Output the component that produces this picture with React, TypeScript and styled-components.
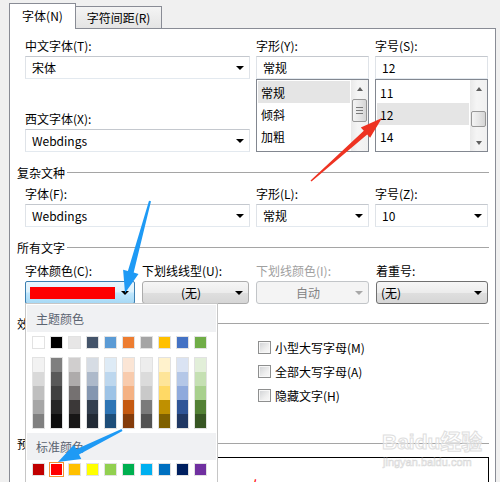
import React from "react";
import styled, { createGlobalStyle, css } from "styled-components";

const GlobalStyle = createGlobalStyle`
  html, body {
    margin: 0;
    padding: 0;
    background: #f0f0f0;
  }
  body {
    font-family: "Noto Sans CJK SC", "Microsoft YaHei", sans-serif;
    font-size: 12px;
    color: #000;
  }
  * {
    box-sizing: border-box;
  }
`;

const Page = styled.div`
  position: relative;
  width: 500px;
  height: 482px;
  overflow: hidden;
  background: #f0f0f0;
`;

const TabStrip = styled.div`
  display: flex;
  align-items: flex-end;
  height: 28px;
  padding-left: 9px;
`;

const Tab = styled.div<{ $active?: boolean }>`
  display: flex;
  align-items: center;
  justify-content: center;
  border: 1px solid #898c95;
  border-bottom: none;
  line-height: 1;
  white-space: nowrap;
  ${(p) =>
    p.$active
      ? css`
          width: 67px;
          height: 26px;
          margin-bottom: -1px;
          padding-bottom: 2px;
          background: #fff;
          position: relative;
          z-index: 1;
        `
      : css`
          width: 86px;
          height: 22px;
          border-left: none;
          background: linear-gradient(#f4f4f4, #e4e4e4);
        `}
`;

const Panel = styled.div`
  width: 487px;
  height: 460px;
  margin-left: 9px;
  border: 1px solid #898c95;
  border-bottom: none;
  background: #fff;
  padding: 9px 6px 0 6px;
`;

const SectionHeader = styled.div<{ $top: number }>`
  display: flex;
  align-items: center;
  gap: 2px;
  height: 16px;
  margin-top: ${(p) => p.$top}px;
  padding-left: 1px;
  white-space: nowrap;
  &::after {
    content: "";
    flex: 1;
    height: 1px;
    background: #a5a5a5;
  }
`;

const Block = styled.div<{ $top?: number; $cols: string; $gap: number }>`
  display: grid;
  grid-template-columns: ${(p) => p.$cols};
  column-gap: ${(p) => p.$gap}px;
  margin-top: ${(p) => p.$top ?? 0}px;
  padding-left: 9px;
`;

const Field = styled.div`
  display: flex;
  flex-direction: column;
`;

const Label = styled.div<{ $disabled?: boolean; $top?: number }>`
  height: 16px;
  line-height: 16px;
  margin-top: ${(p) => p.$top ?? 0}px;
  margin-bottom: 2px;
  white-space: nowrap;
  color: ${(p) => (p.$disabled ? "#a0a0a0" : "#000")};
`;

const TextBox = styled.div`
  display: flex;
  align-items: center;
  justify-content: space-between;
  height: 23px;
  padding: 0 5px 0 6px;
  border: 1px solid;
  border-color: #c4c8ce #dfe3e8 #e3e9ef #dfe3e8;
  background: #fff;
  white-space: nowrap;
`;

const DropArrow = styled.span<{ $disabled?: boolean }>`
  flex: none;
  width: 0;
  height: 0;
  border-left: 4px solid transparent;
  border-right: 4px solid transparent;
  border-top: 4px solid ${(p) => (p.$disabled ? "#a8a8a8" : "#000")};
`;

const ListBox = styled.div`
  display: flex;
  height: 73px;
  border: 1px solid #828790;
  background: #fff;
`;

const ListItems = styled.div`
  flex: 1;
  padding: 1px;
`;

const ListItem = styled.div<{ $selected?: boolean }>`
  display: flex;
  align-items: center;
  height: 22px;
  padding-left: 3px;
  background: ${(p) => (p.$selected ? "#e5e5e5" : "transparent")};
`;

const ScrollBar = styled.div`
  display: flex;
  flex-direction: column;
  width: 17px;
  background: linear-gradient(to right, #e9e9e9, #f5f5f5 40%, #f0f0f0);
`;

const ScrollArrow = styled.div<{ $down?: boolean }>`
  display: flex;
  align-items: center;
  justify-content: center;
  height: 17px;
  &::before {
    content: "";
    width: 0;
    height: 0;
    border-left: 3.5px solid transparent;
    border-right: 3.5px solid transparent;
    ${(p) =>
      p.$down
        ? css`
            border-top: 4px solid #606060;
          `
        : css`
            border-bottom: 4px solid #606060;
          `}
  }
`;

const Thumb = styled.div<{ $offset: number; $size: number; $grip?: boolean }>`
  display: flex;
  flex-direction: column;
  align-items: center;
  justify-content: center;
  gap: 2px;
  height: ${(p) => p.$size}px;
  margin: ${(p) => p.$offset}px 1px 0 1px;
  border: 1px solid #979797;
  border-radius: 2px;
  background: linear-gradient(to right, #f4f4f4, #e6e6e6 50%, #d5d5d5);
  ${(p) =>
    p.$grip &&
    css`
      & > i {
        display: block;
        width: 7px;
        height: 1px;
        background: #7a7a7a;
      }
    `}
`;

const ScrollFill = styled.div`
  flex: 1;
`;

const ColorCombo = styled.div`
  display: flex;
  align-items: center;
  justify-content: space-between;
  height: 23px;
  padding: 0 5px 0 4px;
  border: 1px solid #3c7fb1;
  border-radius: 2px;
  background: linear-gradient(#eaf6fd 0%, #dff2fc 45%, #bee6fd 55%, #a7d9f5 100%);
`;

const ColorBar = styled.div<{ $color: string }>`
  width: 85px;
  height: 12px;
  background: ${(p) => p.$color};
`;

const ButtonCombo = styled.div<{ $left?: boolean; $disabled?: boolean; $dark?: boolean }>`
  display: flex;
  align-items: center;
  height: 23px;
  padding: 0 5px 0 4px;
  border: 1px solid ${(p) => (p.$disabled ? "#c2c5c8" : p.$dark ? "#707070" : "#acacac")};
  border-radius: 3px;
  color: ${(p) => (p.$disabled ? "#838383" : "#000")};
  background: ${(p) =>
    p.$disabled ? "#f4f4f4" : "linear-gradient(#f6f6f6 0%, #ececec 50%, #dfdfdf 51%, #d6d6d6 100%)"};
  white-space: nowrap;
  & > span:first-child {
    flex: 1;
    text-align: ${(p) => (p.$left ? "left" : "center")};
  }
`;

const Effects = styled.div`
  display: grid;
  grid-template-columns: 233px 1fr;
  margin-top: 4px;
  padding-left: 9px;
`;

const EffectColumn = styled.div`
  display: flex;
  flex-direction: column;
`;

const CheckRow = styled.label`
  display: flex;
  align-items: center;
  gap: 4px;
  height: 24px;
  white-space: nowrap;
`;

const CheckBox = styled.span`
  width: 13px;
  height: 13px;
  border: 1px solid #8e8f8f;
  box-shadow: inset 0 0 0 1px #f7f7f7;
  background: linear-gradient(135deg, #cfd1d4, #eeeeee 60%, #fafafa);
`;

const Preview = styled.div`
  height: 60px;
  margin: 6px 0 0 9px;
  padding-top: 18px;
  border: 1px solid #000;
  text-align: center;
  color: #ff0000;
  font-size: 16px;
  line-height: 20px;
`;

const ColorPopup = styled.div`
  position: absolute;
  left: 25px;
  top: 303px;
  z-index: 5;
  width: 193px;
  height: 192px;
  padding: 1px;
  border: 1px solid #c6c6c6;
  background: #fff;
`;

const PopupBand = styled.div<{ $top?: number }>`
  display: flex;
  align-items: center;
  height: 27px;
  margin-top: ${(p) => p.$top ?? 0}px;
  padding-left: 9px;
  background: #f0f1f3;
  color: #5b6370;
`;

const SwatchRow = styled.div<{ $top: number }>`
  display: flex;
  gap: 5px;
  margin-top: ${(p) => p.$top}px;
  padding-left: 5px;
`;

const Swatch = styled.div<{ $color: string; $selected?: boolean }>`
  width: 13px;
  height: 13px;
  border: 1px solid ${(p) => (p.$selected ? "#fff" : "#e2e2e2")};
  outline: ${(p) => (p.$selected ? "1px solid #f29436" : "none")};
  background: ${(p) => p.$color};
`;

const ShadeColumn = styled.div`
  display: flex;
  flex-direction: column;
  width: 13px;
  border: 1px solid #e2e2e2;
`;

const ShadeCell = styled.div<{ $color: string }>`
  height: 14px;
  background: ${(p) => p.$color};
`;

const Overlay = styled.svg`
  position: absolute;
  left: 0;
  top: 0;
  z-index: 10;
  pointer-events: none;
`;

const Watermark = styled.div`
  position: absolute;
  left: 382px;
  top: 428px;
  z-index: 4;
  display: flex;
  flex-direction: column;
  align-items: flex-start;
  pointer-events: none;
  white-space: nowrap;
  font-family: "Liberation Sans", "Noto Sans CJK SC", sans-serif;
  color: rgba(255, 255, 255, 0.5);
  -webkit-text-stroke: 1px #dedede;
  & > b {
    font-size: 21px;
    line-height: 28px;
  }
  & > span {
    font-size: 11px;
    line-height: 12px;
    margin-left: 1px;
    -webkit-text-stroke: 0.6px #d8d8d8;
  }
`;

const themeColors = ["#ffffff", "#000000", "#e7e6e6", "#44546a", "#5b9bd5", "#ed7d31", "#a5a5a5", "#ffc000", "#4472c4", "#70ad47"];

const shades = [
  ["#f2f2f2", "#d9d9d9", "#bfbfbf", "#a6a6a6", "#808080"],
  ["#7f7f7f", "#595959", "#404040", "#262626", "#0d0d0d"],
  ["#d0cece", "#aeabab", "#757171", "#3b3838", "#171616"],
  ["#d6dce4", "#adb9ca", "#8496b0", "#333f4f", "#222a35"],
  ["#deebf6", "#bdd7ee", "#9dc3e6", "#2e75b5", "#1e4e79"],
  ["#fbe5d5", "#f8cbad", "#f4b183", "#c55a11", "#843c0b"],
  ["#ededed", "#dbdbdb", "#c9c9c9", "#7b7b7b", "#525252"],
  ["#fff2cc", "#fee599", "#ffd965", "#bf9000", "#7f6000"],
  ["#dae3f3", "#b4c7e7", "#8faadc", "#2f5597", "#203864"],
  ["#e2efd9", "#c5e0b3", "#a8d08d", "#538135", "#375623"],
];

const standardColors = ["#c00000", "#ff0000", "#ffc000", "#ffff00", "#92d050", "#00b050", "#00b0f0", "#0070c0", "#002060", "#7030a0"];

const Combo: React.FC<{ value: string }> = ({ value }) => (
  <TextBox>
    <span>{value}</span>
    <DropArrow />
  </TextBox>
);

const List: React.FC<{ items: string[]; selected: number; offset: number; size: number; grip?: boolean; down?: boolean }> = (props) => (
  <ListBox>
    <ListItems>
      {props.items.map((it, i) => (
        <ListItem key={it} $selected={i === props.selected}>
          {it}
        </ListItem>
      ))}
    </ListItems>
    <ScrollBar>
      <ScrollArrow />
      <Thumb $offset={props.offset} $size={props.size} $grip={props.grip}>
        {props.grip && (
          <>
            <i />
            <i />
            <i />
          </>
        )}
      </Thumb>
      <ScrollFill />
      {props.down && <ScrollArrow $down />}
    </ScrollBar>
  </ListBox>
);

const Check: React.FC<{ text: string }> = ({ text }) => (
  <CheckRow>
    <CheckBox />
    {text}
  </CheckRow>
);

export default function App() {
  return (
    <Page>
      <GlobalStyle />
      <TabStrip>
        <Tab $active>字体(N)</Tab>
        <Tab>字符间距(R)</Tab>
      </TabStrip>
      <Panel>
        <Block $cols="225px 113px 113px" $gap={6}>
          <Field>
            <Label>中文字体(T):</Label>
            <Combo value="宋体" />
            <Label $top={32}>西文字体(X):</Label>
            <Combo value="Webdings" />
          </Field>
          <Field>
            <Label>字形(Y):</Label>
            <TextBox>常规</TextBox>
            <List items={["常规", "倾斜", "加粗"]} selected={0} offset={2} size={23} grip />
          </Field>
          <Field>
            <Label>字号(S):</Label>
            <TextBox>12</TextBox>
            <List items={["11", "12", "14"]} selected={1} offset={14} size={16} down />
          </Field>
        </Block>

        <SectionHeader $top={12}>复杂文种</SectionHeader>
        <Block $top={6} $cols="225px 113px 113px" $gap={6}>
          <Field>
            <Label>字体(F):</Label>
            <Combo value="Webdings" />
          </Field>
          <Field>
            <Label>字形(L):</Label>
            <Combo value="常规" />
          </Field>
          <Field>
            <Label>字号(Z):</Label>
            <Combo value="10" />
          </Field>
        </Block>

        <SectionHeader $top={12}>所有文字</SectionHeader>
        <Block $top={8} $cols="110px 107px 113px 112px" $gap={7}>
          <Field>
            <Label>字体颜色(C):</Label>
            <ColorCombo>
              <ColorBar $color="#ff0000" />
              <DropArrow />
            </ColorCombo>
          </Field>
          <Field>
            <Label>下划线线型(U):</Label>
            <ButtonCombo>
              <span>(无)</span>
              <DropArrow />
            </ButtonCombo>
          </Field>
          <Field>
            <Label $disabled>下划线颜色(I):</Label>
            <ButtonCombo $disabled>
              <span>自动</span>
              <DropArrow $disabled />
            </ButtonCombo>
          </Field>
          <Field>
            <Label>着重号:</Label>
            <ButtonCombo $left $dark>
              <span>(无)</span>
              <DropArrow />
            </ButtonCombo>
          </Field>
        </Block>

        <SectionHeader $top={11}>效果</SectionHeader>
        <Effects>
          <EffectColumn>
            <Check text="删除线(K)" />
            <Check text="双删除线(L)" />
            <Check text="上标(P)" />
            <Check text="下标(B)" />
          </EffectColumn>
          <EffectColumn>
            <Check text="小型大写字母(M)" />
            <Check text="全部大写字母(A)" />
            <Check text="隐藏文字(H)" />
          </EffectColumn>
        </Effects>

        <SectionHeader $top={4}>预览</SectionHeader>
        <Preview>左</Preview>
      </Panel>

      <Watermark>
        <b>Baidu经验</b>
        <span>jingyan.baidu.com</span>
      </Watermark>

      <ColorPopup>
        <PopupBand>主题颜色</PopupBand>
        <SwatchRow $top={4}>
          {themeColors.map((c) => (
            <Swatch key={c} $color={c} />
          ))}
        </SwatchRow>
        <SwatchRow $top={8}>
          {shades.map((col, i) => (
            <ShadeColumn key={i}>
              {col.map((c) => (
                <ShadeCell key={c} $color={c} />
              ))}
            </ShadeColumn>
          ))}
        </SwatchRow>
        <PopupBand $top={4}>标准颜色</PopupBand>
        <SwatchRow $top={3}>
          {standardColors.map((c) => (
            <Swatch key={c} $color={c} $selected={c === "#ff0000"} />
          ))}
        </SwatchRow>
      </ColorPopup>

      <Overlay width="500" height="482" viewBox="0 0 500 482">
        <polygon
          fill="#ee3322"
          points="382,118 370.1,137.8 367.2,134.5 311.5,181.6 310.5,180.4 363.8,130.7 360.8,127.4"
        />
        <polygon
          fill="#1e9af5"
          points="125,293 138.5,273.9 133.7,272.6 151,201.3 149,200.7 127.9,271 123.1,269.7"
        />
        <polygon
          fill="#1e9af5"
          points="58,462 81.3,459 79,454.6 122.5,430.9 121.5,429.1 76.2,449.2 73.9,444.8"
        />
      </Overlay>
    </Page>
  );
}
